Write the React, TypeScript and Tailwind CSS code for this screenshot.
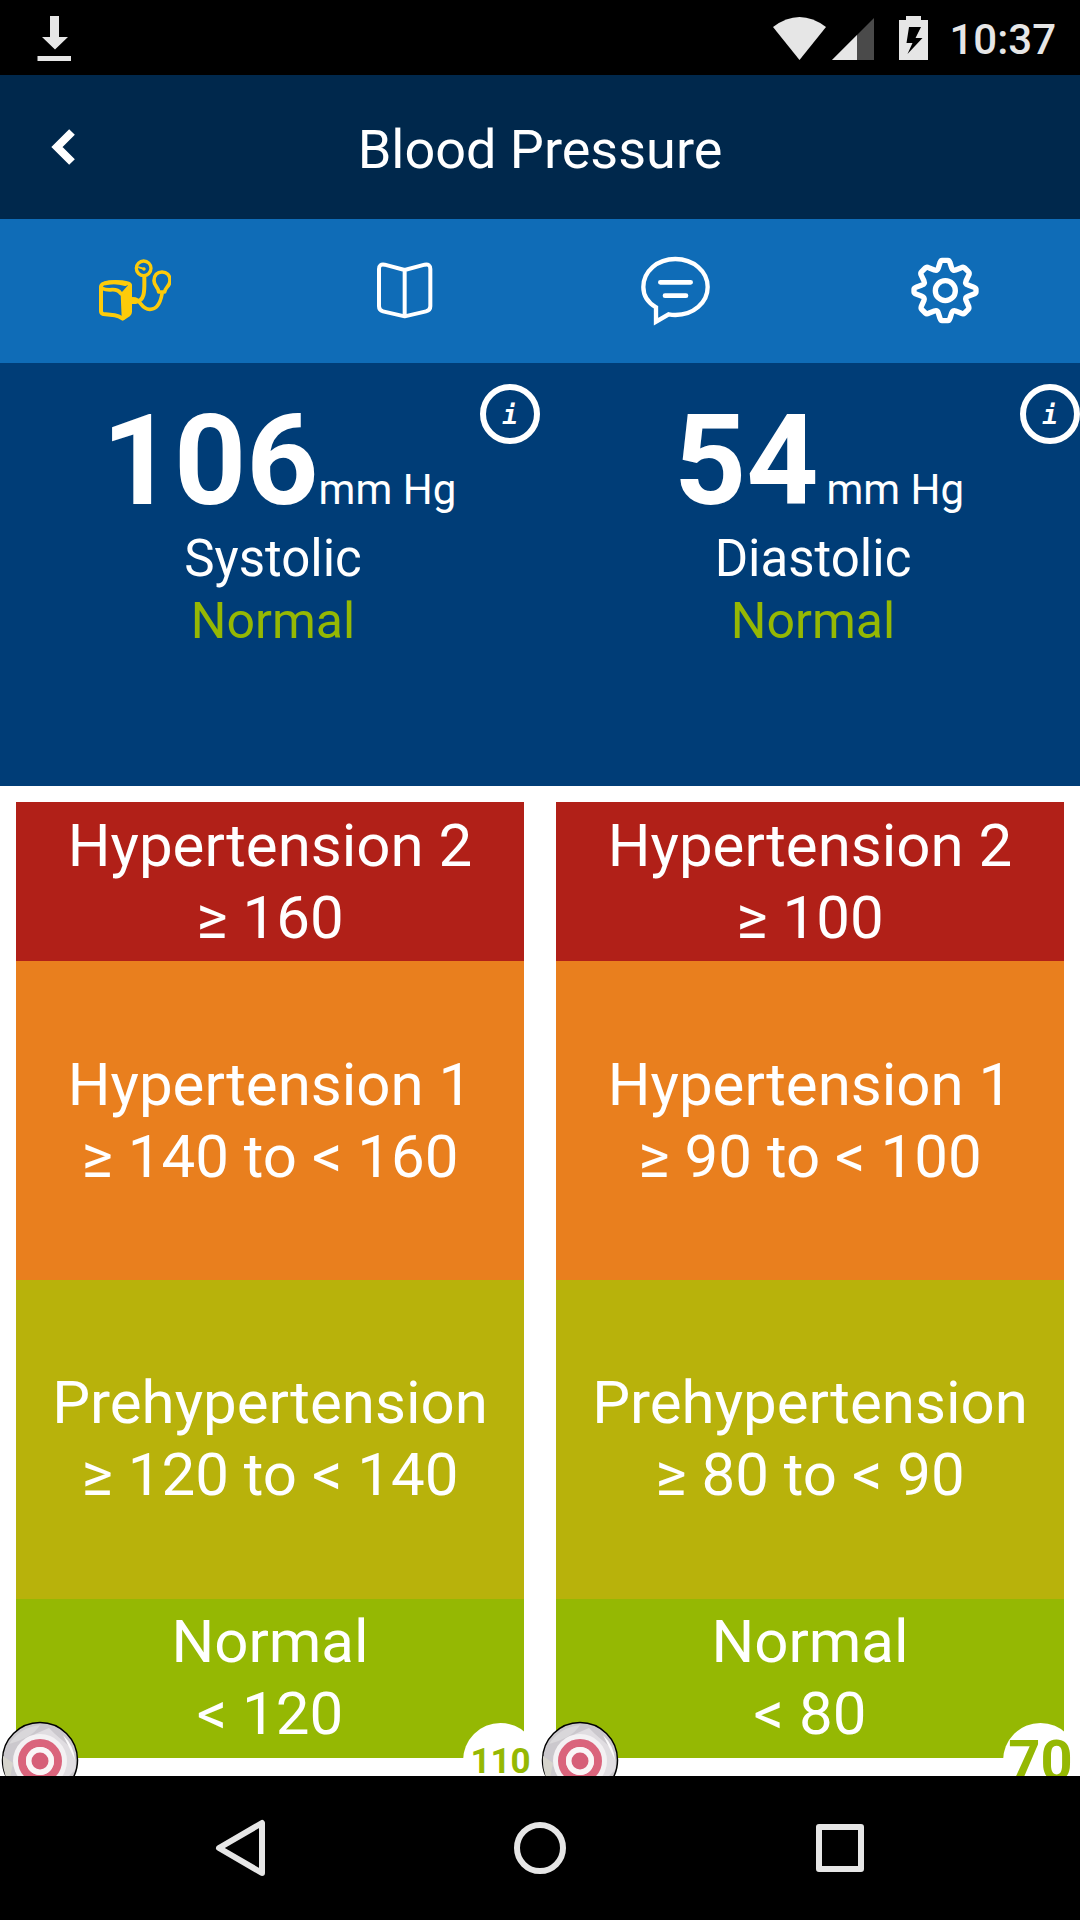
import React from "react";

type Band = { name: string; range: string; color: string };

const red = "bg-[#b12018]";
const orange = "bg-[#e97f1e]";
const olive = "bg-[#b8b20b]";
const green = "bg-[#95b803]";

const systolic: Band[] = [
  { name: "Hypertension 2", range: "≥ 160", color: red },
  { name: "Hypertension 1", range: "≥ 140 to < 160", color: orange },
  { name: "Prehypertension", range: "≥ 120 to < 140", color: olive },
  { name: "Normal", range: "< 120", color: green },
];

const diastolic: Band[] = [
  { name: "Hypertension 2", range: "≥ 100", color: red },
  { name: "Hypertension 1", range: "≥ 90 to < 100", color: orange },
  { name: "Prehypertension", range: "≥ 80 to < 90", color: olive },
  { name: "Normal", range: "< 80", color: green },
];

function StatusBar() {
  return (
    <div className="flex h-[75px] items-center bg-black pl-9 pr-6 text-[#e6e6e6]">
      <svg className="h-[46px] w-9" viewBox="36 15 36 46" fill="currentColor" aria-label="Download complete">
        <path d="M50 16h9v21h9L55 49.500 42 37h8zM37.500 56H71v5H37.500z" />
      </svg>
      <svg className="ml-auto h-[46px] w-[156px]" viewBox="773 14 156 46" fill="currentColor" aria-label="Wi-Fi, signal, charging">
        <path d="M773 26Q799.500 6 826 26L799.500 59z" />
        <path d="M832 59l42-42v42z" fill="#4a4a4a" />
        <path d="M832 59l25-25v25z" />
        <path fillRule="evenodd" d="M899 19h7v-4h15v4h7v40h-29zM909 26l-2.500 16h6l-5 11 15-16h-7l5.500-11z" />
      </svg>
      <span className="ml-5 pt-1 text-[42px] leading-none font-medium">10:37</span>
    </div>
  );
}

function Header() {
  return (
    <header className="relative flex h-36 items-center justify-center bg-[#00284c]">
      <button type="button" aria-label="Back" className="absolute left-0 flex h-full w-32 items-center pl-12">
        <svg className="h-10 w-7" viewBox="0 0 28 40" fill="none" stroke="#fff" strokeWidth="8" strokeLinejoin="miter">
          <path d="M24 5L9 20 24 35" />
        </svg>
      </button>
      <h1 className="pt-1.5 text-[54px] leading-none">Blood Pressure</h1>
    </header>
  );
}

function CuffIcon() {
  return (
    <svg className="size-[72px]" viewBox="117 75 216 216" fill="none" stroke="#fdcb0a" strokeWidth="12" strokeLinejoin="round" strokeLinecap="round">
      <path d="M123 170v74q0 6 7 8l34 4q12 2 24 10l18-12q4-3 4-9v-80q-2-9-44-9t-43 14z" />
      <path d="M126 175q14 6 30 4 18-1 25 10l5 4" strokeWidth="11" />
      <path d="M187 192l20-22v78l-17 16z" fill="#fdcb0a" strokeWidth="10" />
      <path d="M136 160q28-7 60 2" strokeWidth="12" />
      <circle cx="251" cy="115" r="22" strokeWidth="10" />
      <path d="M237 112l16 5" strokeWidth="6" />
      <circle cx="252" cy="117" r="3" strokeWidth="4" />
      <path d="M253 142c0 35 4 71-26 74h-12" strokeWidth="12" />
      <path d="M213 207c32-5 26 32 57 31 25 0 32-24 36-46" strokeWidth="11" />
      <path d="M296 186c0-14-14-17-14-34 0-16 10-26 24-26s24 10 24 26c0 17-16 21-16 34z" strokeWidth="11" />
    </svg>
  );
}

function BookIcon() {
  return (
    <svg className="size-[72px]" viewBox="927 75 216 216" fill="none" stroke="#fff" strokeWidth="12" strokeLinejoin="round">
      <path d="M1034 120l-60-16q-17-3-17 13v112q0 12 12 15l65 15 64-15q13-3 13-15V117q0-16-17-13zM1034 120v139" />
    </svg>
  );
}

function ChatIcon() {
  return (
    <svg className="size-[72px]" viewBox="117 75 216 216" fill="none" stroke="#fff" strokeWidth="13">
      <path d="M168 232c-24-14-38-36-38-61 0-47 42-84 96-84s97 37 97 84-43 84-97 84q-10 0-20-2l-38 22z" />
      <path d="M181 157h91M195 197h63" strokeWidth="14" strokeLinecap="round" />
    </svg>
  );
}

function GearIcon() {
  return (
    <svg className="size-[72px]" viewBox="927 75 216 216" fill="none" stroke="#fff" strokeWidth="16" strokeLinejoin="round">
      <path d="M1026 91h18q4 0 6 7l5 16q3 9 12 6l17-7q6-3 10 1l11 11q4 4 2 9l-9 19q-4 9 6 12l16 6q8 3 8 6v9q0 4-8 7l-16 6q-9 3-6 12l8 18q2 6-1 9l-11 11q-4 4-10 1l-17-7q-9-3-12 6l-5 16q-2 7-6 7h-18q-4 0-6-7l-5-16q-3-9-12-6l-17 7q-6 3-10-1l-11-11q-3-3-1-9l8-18q3-9-6-12l-16-6q-8-3-8-7v-9q0-3 8-6l16-6q10-3 6-12l-9-19q-2-5 2-9l11-11q4-4 10-1l17 7q9 3 12-6l5-16q2-7 6-7z" />
      <circle cx="1036" cy="182" r="30" />
    </svg>
  );
}

function Tabs() {
  const tabs = [
    { label: "Measurements", icon: <CuffIcon /> },
    { label: "Journal", icon: <BookIcon /> },
    { label: "Messages", icon: <ChatIcon /> },
    { label: "Settings", icon: <GearIcon /> },
  ];
  return (
    <nav className="grid h-36 grid-cols-4 bg-[#0f6cb7]">
      {tabs.map((t) => (
        <button key={t.label} type="button" aria-label={t.label} className="flex items-center justify-center">
          {t.icon}
        </button>
      ))}
    </nav>
  );
}

function Reading({ value, label, spaced }: { value: string; label: string; spaced?: boolean }) {
  return (
    <section className="relative flex flex-col items-center pt-[34px] pb-[133px] pl-1.5">
      <button
        type="button"
        aria-label={`About ${label}`}
        className="absolute top-[21px] right-0 flex size-[60px] items-center justify-center rounded-full border-[6px] border-white pt-0.5 font-['DejaVu_Sans_Mono',monospace] text-[26px] leading-none font-bold italic"
      >
        i
      </button>
      <div className="flex items-baseline pl-3">
        <span className="text-[126px] leading-[128px] font-bold">{value}</span>
        <span className={spaced ? "ml-2 text-[42px]" : "text-[42px]"}>mm Hg</span>
      </div>
      <h2 className="mt-0.5 text-[51px] leading-[63px]">{label}</h2>
      <p className="text-[50px] leading-[63px] text-[#95b803]">Normal</p>
    </section>
  );
}

function TargetIcon() {
  return (
    <svg className="size-[78px]" viewBox="0 0 78 78" aria-label="Target">
      <circle cx="39" cy="39" r="37.500" fill="#cbc8cd" stroke="#000" strokeWidth="1.500" />
      <path d="M8 23Q18 7 39 4q-4 7-13 12T8 23z" fill="#d9d7da" />
      <path d="M34 13l14-6 6 6 14 12q9 12 6 24l-14 14z" fill="#e0dde1" />
      <path d="M62 14q11 11 12 25l-6-13z" fill="#fbfafb" />
      <path d="M2 35q-1 16 6 27l4-20z" fill="#d6d4cc" />
      <circle cx="39" cy="40" r="27" fill="#f3f1f3" />
      <circle cx="39" cy="40" r="18" fill="none" stroke="#da647c" strokeWidth="8" />
      <circle cx="39" cy="40" r="14" fill="#faf6f7" />
      <circle cx="39" cy="40" r="8.500" fill="#d65f78" />
    </svg>
  );
}

function Scale({ bands, goal, large }: { bands: Band[]; goal: string; large?: boolean }) {
  return (
    <section className="relative grid grid-rows-[1fr_2fr_2fr_1fr] px-4 pt-4 pb-[18px]">
      {bands.map((b) => (
        <div
          key={b.name}
          className={`flex flex-col items-center justify-center text-[60px] leading-[72px] ${b.color}`}
        >
          <span>{b.name}</span>
          <span>{b.range}</span>
        </div>
      ))}
      <div className="absolute -bottom-[23px] left-px">
        <TargetIcon />
      </div>
      <div
        className={`absolute right-0.5 -bottom-[22px] flex size-[75px] items-center justify-center rounded-full bg-white leading-none font-bold text-[#95b803] ${
          large ? "text-[56px]" : "pt-0.5 text-[35px]"
        }`}
      >
        {goal}
      </div>
    </section>
  );
}

function SystemNav() {
  return (
    <nav className="grid h-36 grid-cols-3 bg-black px-[90px]">
      <button type="button" aria-label="Back" className="flex items-center justify-center">
        <svg className="size-[60px]" viewBox="0 0 60 60" fill="none" stroke="#e6e6e6" strokeWidth="6" strokeLinejoin="round">
          <path d="M9 30L52 5v50z" />
        </svg>
      </button>
      <button type="button" aria-label="Home" className="flex items-center justify-center">
        <svg className="size-[60px]" viewBox="0 0 60 60" fill="none" stroke="#e6e6e6" strokeWidth="6">
          <circle cx="30" cy="30" r="23" />
        </svg>
      </button>
      <button type="button" aria-label="Recent apps" className="flex items-center justify-center">
        <svg className="size-[60px]" viewBox="0 0 60 60" fill="none" stroke="#e6e6e6" strokeWidth="6" strokeLinejoin="round">
          <path d="M9 9h42v42H9z" />
        </svg>
      </button>
    </nav>
  );
}

export default function App() {
  return (
    <div className="flex min-h-screen flex-col bg-white font-['Roboto',sans-serif] text-white">
      <StatusBar />
      <Header />
      <Tabs />
      <div className="grid grid-cols-2 bg-[#003d77]">
        <Reading value="106" label="Systolic" />
        <Reading value="54" label="Diastolic" spaced />
      </div>
      <main className="grid flex-1 grid-cols-2 overflow-hidden bg-white">
        <Scale bands={systolic} goal="110" />
        <Scale bands={diastolic} goal="70" large />
      </main>
      <SystemNav />
    </div>
  );
}
